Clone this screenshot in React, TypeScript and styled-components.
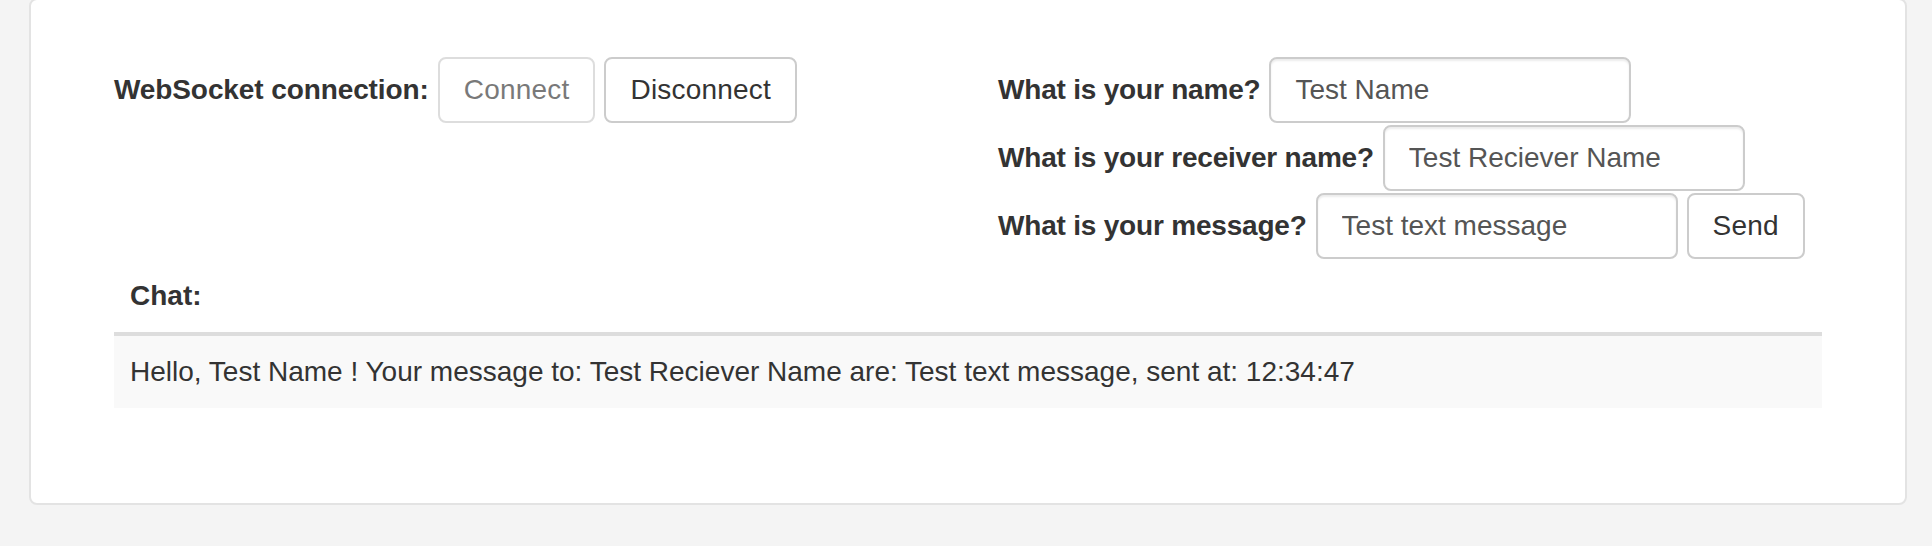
import React from 'react'
import styled, { createGlobalStyle } from 'styled-components'

const GlobalStyle = createGlobalStyle`
  html, body {
    margin: 0;
    padding: 0;
    background: #f4f4f4;
  }
  body {
    font-family: 'Liberation Sans', Arial, Helvetica, sans-serif;
    font-size: 28px;
    line-height: 40px;
    color: #333;
  }
`

/* Page */
const Page = styled.div`
  padding: 0 25px 41px 29px;
`
const Card = styled.div`
  margin-top: -2px;
  background: #fff;
  border: 2px solid #e3e3e3;
  border-radius: 8px;
  padding: 57px 83px 95px;
`
/* Forms */
const TopRow = styled.div`
  display: grid;
  grid-template-columns: 1fr 1fr;
  column-gap: 60px;
`
const FormStack = styled.form`
  display: flex;
  flex-direction: column;
  align-items: flex-start;
  gap: 2px;
  margin: 0;
`
const FormRow = styled.div`
  display: flex;
  align-items: center;
  gap: 9px;
  height: 66px;
`
const Label = styled.label<{ $spacing?: number }>`
  font-weight: bold;
  letter-spacing: ${(p) => p.$spacing ?? -0.2}px;
  white-space: nowrap;
`
const Input = styled.input`
  box-sizing: border-box;
  width: 362px;
  height: 66px;
  padding: 0 24px;
  border: 2px solid #ccc;
  border-radius: 8px;
  box-shadow: inset 0 2px 2px rgba(0, 0, 0, 0.075);
  font-family: inherit;
  font-size: 28px;
  color: #555;
  background: #fff;
  outline: none;
`
const Button = styled.button<{ $disabled?: boolean }>`
  box-sizing: border-box;
  height: 66px;
  padding: 0 24px;
  border: 2px solid #ccc;
  border-radius: 8px;
  background: #fff;
  font-family: inherit;
  font-size: 28px;
  letter-spacing: 0.2px;
  color: #333;
  white-space: nowrap;
  cursor: pointer;
  opacity: ${(p) => (p.$disabled ? 0.65 : 1)};
`
/* Chat */
const ChatTable = styled.table`
  width: 100%;
  margin-top: 1px;
  border-collapse: collapse;
  border-spacing: 0;
`
const HeadCell = styled.th`
  text-align: left;
  font-weight: bold;
  padding: 16px;
  line-height: 40px;
  border-bottom: 4px solid #ddd;
`
const Cell = styled.td`
  padding: 16px;
  line-height: 40px;
  background: #f9f9f9;
`

const App = () => {
  return (
    <>
      <GlobalStyle />
      <Page>
        <Card>
          <TopRow>
            <FormStack>
              <FormRow>
                <Label htmlFor="connect" $spacing={-0.1}>
                  WebSocket connection:
                </Label>
                <Button id="connect" type="button" $disabled disabled>
                  Connect
                </Button>
                <Button type="button">Disconnect</Button>
              </FormRow>
            </FormStack>
            <FormStack>
              <FormRow>
                <Label htmlFor="name">What is your name?</Label>
                <Input id="name" defaultValue="Test Name" />
              </FormRow>
              <FormRow>
                <Label htmlFor="receiver">What is your receiver name?</Label>
                <Input id="receiver" defaultValue="Test Reciever Name" />
              </FormRow>
              <FormRow>
                <Label htmlFor="message">What is your message?</Label>
                <Input id="message" defaultValue="Test text message" />
                <Button type="button">Send</Button>
              </FormRow>
            </FormStack>
          </TopRow>
          <ChatTable>
            <thead>
              <tr>
                <HeadCell>Chat:</HeadCell>
              </tr>
            </thead>
            <tbody>
              <tr>
                <Cell>
                  Hello, Test Name ! Your message to: Test Reciever Name are: Test text message, sent at: 12:34:47
                </Cell>
              </tr>
            </tbody>
          </ChatTable>
        </Card>
      </Page>
    </>
  )
}

export default App
